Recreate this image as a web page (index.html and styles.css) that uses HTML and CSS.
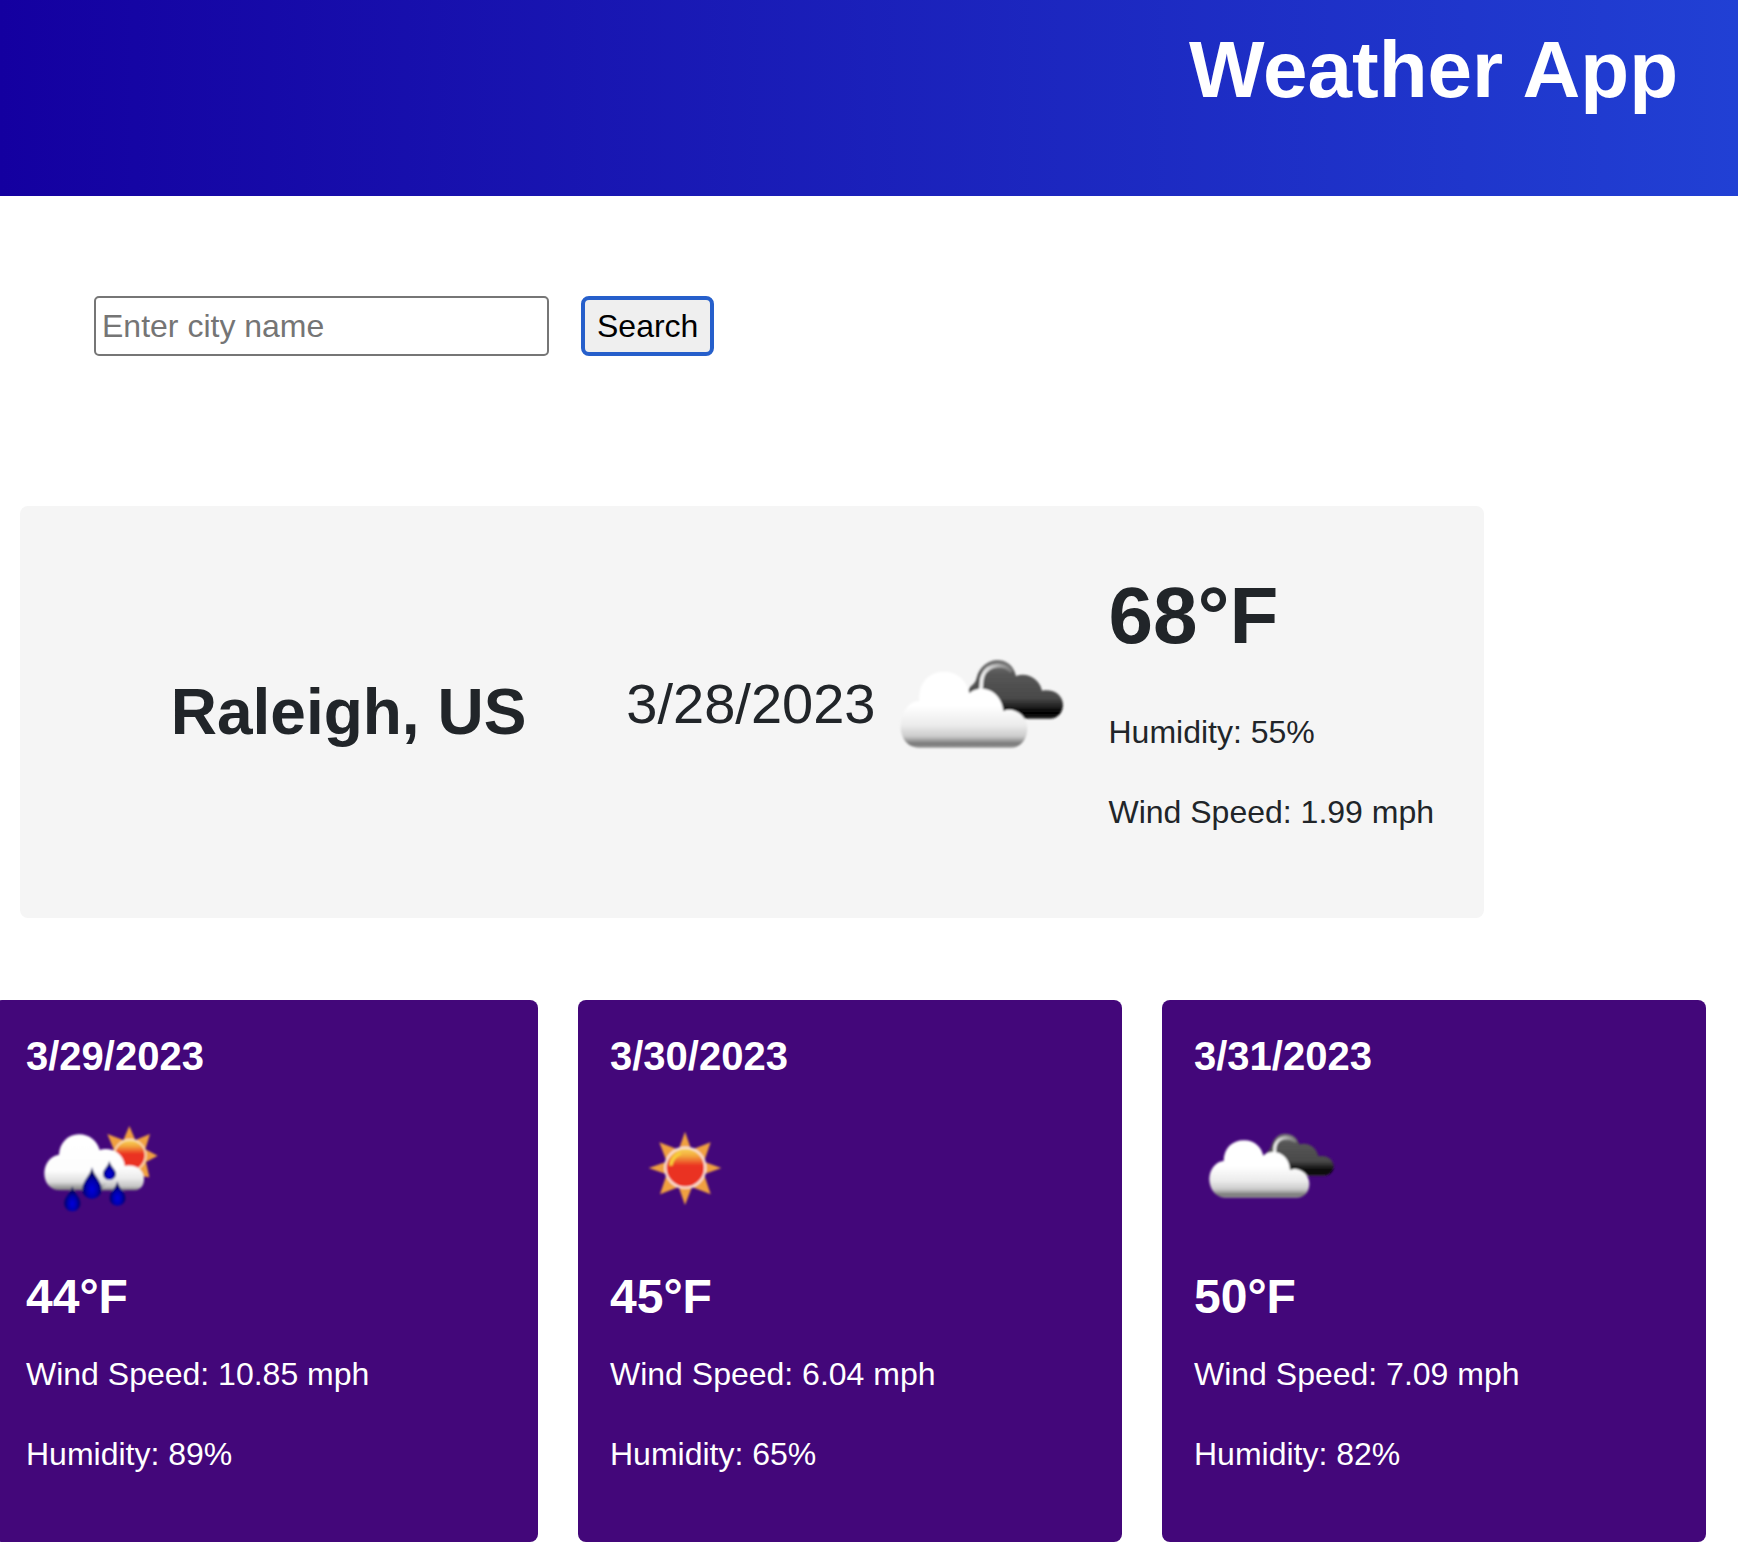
FILE: index.html
```html
<!DOCTYPE html>
<html lang="en">
<head>
<meta charset="utf-8">
<meta name="viewport" content="width=device-width, initial-scale=1">
<title>Weather App</title>
<link rel="stylesheet" href="styles.css">
</head>
<body>
<svg class="sprite" aria-hidden="true">
  <defs>
    <linearGradient id="cloud-light" x1="0" y1="0" x2="0" y2="1">
      <stop offset="0" stop-color="#fff"/>
      <stop offset=".45" stop-color="#fff"/>
      <stop offset=".7" stop-color="#ececec"/>
      <stop offset=".85" stop-color="#ccc"/>
      <stop offset=".95" stop-color="#777"/>
      <stop offset="1" stop-color="#999"/>
    </linearGradient>
    <linearGradient id="cloud-dark" x1="0" y1="0" x2="0" y2="1">
      <stop offset="0" stop-color="#777"/>
      <stop offset=".25" stop-color="#555"/>
      <stop offset=".65" stop-color="#4a4a4a"/>
      <stop offset=".9" stop-color="#000"/>
      <stop offset="1" stop-color="#222"/>
    </linearGradient>
    <linearGradient id="shine" x1="0" y1="0" x2="1" y2="0">
      <stop offset="0" stop-color="#f4f4f4"/>
      <stop offset=".4" stop-color="#c4c4c4"/>
      <stop offset="1" stop-color="#777"/>
    </linearGradient>
    <linearGradient id="sun-core" x1="0" y1="0" x2="0" y2="1">
      <stop offset="0" stop-color="#f8d860"/>
      <stop offset=".2" stop-color="#f3a93c"/>
      <stop offset=".45" stop-color="#ea3323"/>
      <stop offset="1" stop-color="#ea3323"/>
    </linearGradient>
    <linearGradient id="rain-cloud" x1="0" y1="0" x2="0" y2="1">
      <stop offset="0" stop-color="#fff"/>
      <stop offset=".65" stop-color="#fdfdfd"/>
      <stop offset=".85" stop-color="#ddd"/>
      <stop offset="1" stop-color="#777"/>
    </linearGradient>
    <linearGradient id="rain-cloud-small" x1="0" y1="0" x2="0" y2="1">
      <stop offset="0" stop-color="#fff"/>
      <stop offset=".5" stop-color="#ececec"/>
      <stop offset=".85" stop-color="#c4c4c4"/>
      <stop offset="1" stop-color="#777"/>
    </linearGradient>
    <radialGradient id="drop-fill" cx=".5" cy=".7" r=".5">
      <stop offset="0" stop-color="#0000e0"/>
      <stop offset=".6" stop-color="#0000a8"/>
      <stop offset="1" stop-color="#00005c"/>
    </radialGradient>
    <filter id="soft" x="-10%" y="-10%" width="120%" height="120%">
      <feGaussianBlur stdDeviation="3"/>
    </filter>
  </defs>
  <symbol id="broken-clouds" viewBox="0 -102 600 600">
    <g filter="url(#soft)">
      <path fill="url(#cloud-dark)" d="M264 155C268 135 286 135 290 113C298 80 325 60 352 60C380 60 402 78 408 108C445 95 480 120 486 152C520 145 549 165 549 194C549 220 530 236 512 236H300Z"/>
      <path fill="none" stroke="url(#shine)" stroke-width="11" d="M302 150C306 130 302 120 309 106C318 86 334 78 352 77C372 76 386 84 396 94"/>
      <path fill="url(#cloud-light)" d="M115 323C80 323 60 290 62 255C64 215 85 185 118 182C115 130 145 95 192 95C235 95 262 125 268 160C285 145 300 145 315 147C345 152 368 180 370 213C400 200 442 225 442 265C442 300 420 323 395 323Z"/>
    </g>
  </symbol>
  <symbol id="broken-clouds-small" viewBox="12 -69 450 450">
    <g filter="url(#soft)">
      <path fill="url(#cloud-dark)" d="M218 128C226 112 240 108 244 92C250 70 266 56 286 56C306 56 322 68 328 88C356 80 380 98 385 124C410 118 431 134 431 154C431 172 416 182 402 182H240Z"/>
      <path fill="none" stroke="url(#shine)" stroke-width="9" d="M253 120C256 104 252 96 258 86C264 74 274 69 286 68C300 68 310 72 318 80"/>
      <path fill="url(#cloud-light)" d="M104 248C76 248 57 220 58 190C60 160 78 140 101 138C102 100 126 76 162 76C196 76 214 98 220 122C230 112 246 110 258 112C284 116 299 140 300 165C326 154 358 176 358 206C358 232 342 248 320 248Z"/>
    </g>
  </symbol>
  <symbol id="clear-sky" viewBox="-60 -69 450 450">
    <g filter="url(#soft)">
      <path fill="#f0a040" d="M165 50L184 104L242 82L222 140L274 159L222 178L242 238L186 216L165 270L146 216L90 238L110 178L56 159L110 140L88 82L146 104Z"/>
      <circle cx="166" cy="158" r="60" fill="url(#sun-core)" stroke="#fbe3d8" stroke-width="7"/>
      <path d="M122 152C124 132 136 122 152 114" fill="none" stroke="#f7cf3a" stroke-width="10"/>
    </g>
  </symbol>
  <symbol id="rain" viewBox="18 -54 450 450">
    <g filter="url(#soft)">
      <path fill="#f0a040" d="M328 48L346 90L390 72L376 118L413 137L378 156L388 202L340 196L270 140L281 118L262 72L310 90Z"/>
      <circle cx="330" cy="136" r="47" fill="url(#sun-core)" stroke="#fbe3c0" stroke-width="5"/>
      <path fill="url(#rain-cloud)" d="M120 241C90 241 73 218 73 190C73 160 92 138 117 134C119 98 144 73 177 73C208 73 232 93 239 120C268 110 310 125 315 170L320 241Z"/>
      <path fill="url(#rain-cloud-small)" d="M240 241C270 215 290 180 306 171C335 158 372 172 372 207C372 228 360 241 342 241Z"/>
      <path fill="url(#drop-fill)" d="M216 172C222 198 245 213 245 237C245 254 232 266 216 266C199 266 187 254 187 237C187 213 210 198 216 172Z"/>
      <path fill="url(#drop-fill)" d="M268 152C272 170 288 177 288 191C288 202 279 210 268 210C257 210 249 202 249 191C249 177 264 170 268 152Z"/>
      <path fill="url(#drop-fill)" d="M157 228C162 250 181 260 181 280C181 294 171 304 157 304C143 304 133 294 133 280C133 260 152 250 157 228Z"/>
      <path fill="url(#drop-fill)" d="M292 214C297 236 316 246 316 264C316 278 306 287 292 287C279 287 269 278 269 264C269 246 287 236 292 214Z"/>
    </g>
  </symbol>
</svg>

<header class="header">
  <h1 class="header-title">Weather App</h1>
</header>

<main>
  <form class="search">
    <input class="search-input" type="text" placeholder="Enter city name" aria-label="City name">
    <button class="search-button" type="button">Search</button>
  </form>

  <section class="current" aria-label="Current weather">
    <h2 class="current-city">Raleigh, US</h2>
    <p class="current-date">3/28/2023</p>
    <svg class="current-icon" role="img" aria-label="Broken clouds"><use href="#broken-clouds"/></svg>
    <div class="current-info">
      <p class="current-temp">68°F</p>
      <p class="detail">Humidity: 55%</p>
      <p class="detail">Wind Speed: 1.99 mph</p>
    </div>
  </section>

  <section class="forecast" aria-label="Forecast">
    <article class="day">
      <h3 class="day-date">3/29/2023</h3>
      <svg class="day-icon" role="img" aria-label="Rain"><use href="#rain"/></svg>
      <p class="day-temp">44°F</p>
      <p class="detail">Wind Speed: 10.85 mph</p>
      <p class="detail">Humidity: 89%</p>
    </article>
    <article class="day">
      <h3 class="day-date">3/30/2023</h3>
      <svg class="day-icon" role="img" aria-label="Clear sky"><use href="#clear-sky"/></svg>
      <p class="day-temp">45°F</p>
      <p class="detail">Wind Speed: 6.04 mph</p>
      <p class="detail">Humidity: 65%</p>
    </article>
    <article class="day">
      <h3 class="day-date">3/31/2023</h3>
      <svg class="day-icon" role="img" aria-label="Broken clouds"><use href="#broken-clouds-small"/></svg>
      <p class="day-temp">50°F</p>
      <p class="detail">Wind Speed: 7.09 mph</p>
      <p class="detail">Humidity: 82%</p>
    </article>
  </section>
</main>
</body>
</html>
```

FILE: styles.css
```css
* {
  box-sizing: border-box;
}

body {
  margin: 0;
  overflow-x: hidden;
  background: #fff;
  color: #212529;
  font-family: Arial, "Liberation Sans", sans-serif;
  font-size: 32px;
  line-height: 48px;
}

h1, h2, h3, p {
  margin: 0;
}

.sprite {
  position: absolute;
  width: 0;
  height: 0;
}

.header {
  padding: 22px 60px 78px;
  background: linear-gradient(to right, #1400a0, #2140d4);
  color: #fff;
  text-align: right;
}

.header-title {
  font-size: 80px;
  line-height: 96px;
}

.search {
  display: flex;
  gap: 32px;
  padding: 100px 94px 150px;
}

.search-input,
.search-button {
  height: 60px;
  font: inherit;
}

.search-input {
  width: 455px;
  padding: 0 6px;
  border: 2px solid #767676;
  border-radius: 5px;
  background: #fff;
  color: #000;
}

.search-input::placeholder {
  color: #757575;
  opacity: 1;
}

.search-button {
  padding: 0 12px;
  border: 4px solid #265fcb;
  border-radius: 8px;
  background: #efefef;
  color: #000;
}

.current {
  display: flex;
  align-items: center;
  justify-content: flex-end;
  margin: 0 254px 82px 20px;
  padding: 50px;
  border-radius: 8px;
  background: #f5f5f5;
}

.current-city {
  margin-right: 100px;
  font-size: 64px;
  line-height: 76px;
}

.current-date {
  margin: 0 5px 16px 0;
  font-size: 56px;
  line-height: 68px;
}

.current-icon {
  flex: none;
  width: 200px;
  height: 200px;
  margin: 0 28px 12px 0;
}

.current-info {
  padding-top: 12px;
}

.current-temp {
  margin-bottom: 44px;
  font-size: 80px;
  font-weight: bold;
  line-height: 96px;
}

.detail {
  margin-bottom: 32px;
}

.forecast {
  display: grid;
  grid-template-columns: repeat(3, 1fr);
  gap: 40px;
  margin: 0 32px 14px -6px;
}

.day {
  padding: 32px;
  border-radius: 8px;
  background: #43077a;
  color: #fff;
}

.day-date {
  font-size: 40px;
  line-height: 48px;
}

.day-icon {
  display: block;
  width: 150px;
  height: 150px;
  margin: 12px 0 26px;
}

.day-temp {
  margin-bottom: 24px;
  font-size: 48px;
  font-weight: bold;
  line-height: 58px;
}
```
